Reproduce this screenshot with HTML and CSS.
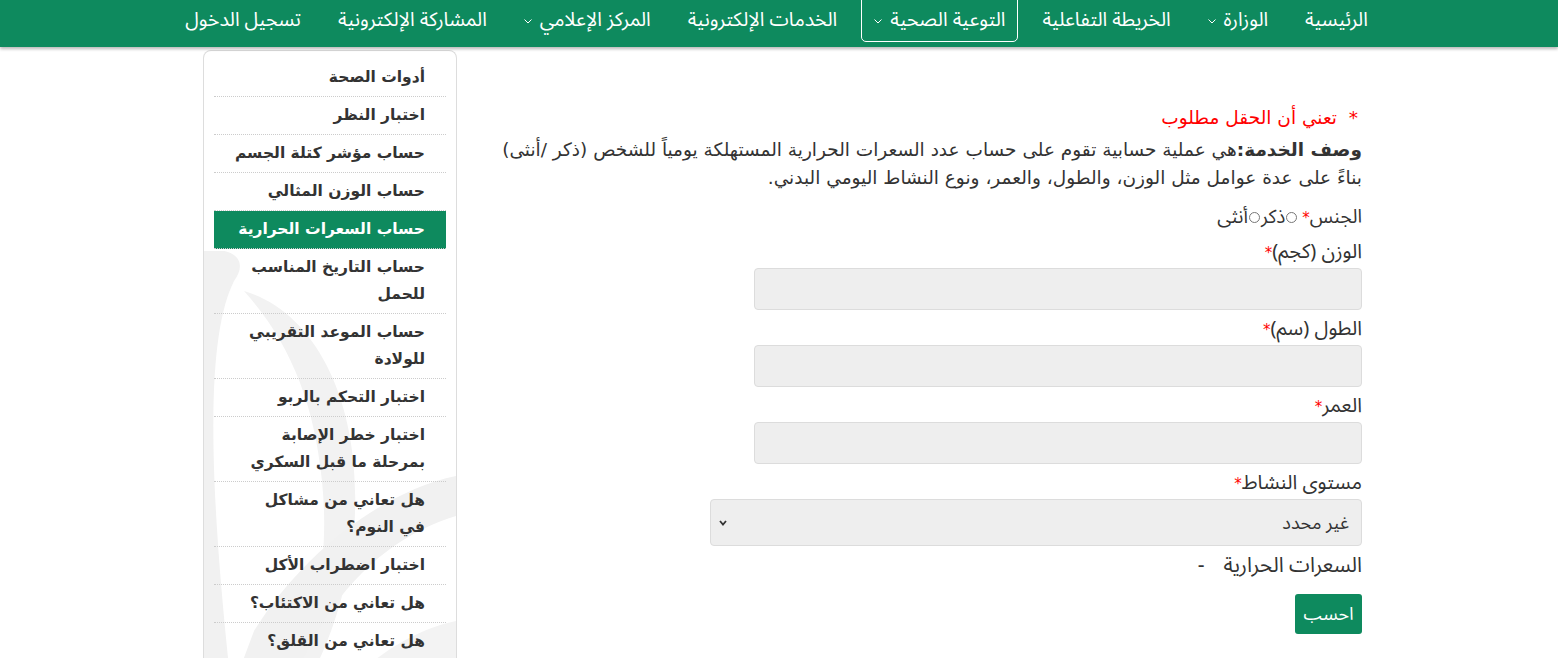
FILE: index.html
```html
<!DOCTYPE html>
<html lang="ar" dir="rtl">
<head>
<meta charset="utf-8">
<title>حساب السعرات الحرارية</title>
<link rel="stylesheet" href="styles.css">
</head>
<body>
<nav class="topnav">
  <ul class="nav-list">
    <li class="nav-item"><a class="nav-link">الرئيسية</a></li>
    <li class="nav-item"><a class="nav-link">الوزارة<svg class="chev" width="8" height="5" viewBox="0 0 8 5"><polyline points="0.5,0.5 4,4 7.5,0.5" fill="none" stroke="#fff" stroke-width="1"/></svg></a></li>
    <li class="nav-item"><a class="nav-link">الخريطة التفاعلية</a></li>
    <li class="nav-item"><a class="nav-link nav-link-active">التوعية الصحية<svg class="chev" width="8" height="5" viewBox="0 0 8 5"><polyline points="0.5,0.5 4,4 7.5,0.5" fill="none" stroke="#fff" stroke-width="1"/></svg></a></li>
    <li class="nav-item"><a class="nav-link">الخدمات الإلكترونية</a></li>
    <li class="nav-item"><a class="nav-link">المركز الإعلامي<svg class="chev" width="8" height="5" viewBox="0 0 8 5"><polyline points="0.5,0.5 4,4 7.5,0.5" fill="none" stroke="#fff" stroke-width="1"/></svg></a></li>
    <li class="nav-item"><a class="nav-link">المشاركة الإلكترونية</a></li>
    <li class="nav-item"><a class="nav-link">تسجيل الدخول</a></li>
  </ul>
</nav>

<div class="page">
  <main class="content">
    <p class="required-note"><span class="req-star">*</span>&nbsp; تعني أن الحقل مطلوب</p>
    <p class="desc"><strong>وصف الخدمة:</strong>هي عملية حسابية تقوم على حساب عدد السعرات الحرارية المستهلكة يومياً للشخص (ذكر /أنثى) بناءً على عدة عوامل مثل الوزن، والطول، والعمر، ونوع النشاط اليومي البدني.</p>

    <form class="calc-form">
      <div class="gender-row">
        <span class="field-label">الجنس<span class="req">*</span></span>
        <label class="radio-opt"><span class="radio"></span>ذكر</label><label class="radio-opt"><span class="radio"></span>أنثى</label>
      </div>

      <div class="form-group">
        <label class="field-label">الوزن (كجم)<span class="req">*</span></label>
        <input class="text-input" type="text">
      </div>
      <div class="form-group">
        <label class="field-label">الطول (سم)<span class="req">*</span></label>
        <input class="text-input" type="text">
      </div>
      <div class="form-group">
        <label class="field-label">العمر<span class="req">*</span></label>
        <input class="text-input" type="text">
      </div>
      <div class="form-group">
        <label class="field-label">مستوى النشاط<span class="req">*</span></label>
        <div class="select-box">
          <span class="select-value">غير محدد</span>
          <svg class="select-chev" width="8" height="6" viewBox="0 0 8 6"><polyline points="1,1 4,4.5 7,1" fill="none" stroke="#333" stroke-width="1.8"/></svg>
        </div>
      </div>
      <div class="result-line field-label">السعرات الحرارية <span class="result-value"></span> -</div>
      <button class="calc-btn" type="button">احسب</button>
    </form>
  </main>

  <aside class="sidebar">
    <svg class="watermark" width="252" height="460" viewBox="0 0 252 460">
      <path d="M0 0 C 30 -5, 45 10, 30 30 C 5 80, 0 200, 30 460 L 0 460 Z" fill="#f1f1f1"/>
      <path d="M40 40 C 110 60, 160 150, 150 280 C 145 330, 130 380, 110 420 L 90 420 C 115 360, 125 300, 118 230 C 110 150, 85 90, 40 40 Z" fill="#f2f2f2"/>
      <path d="M252 225 C 180 240, 100 300, 50 380 L 20 460 L 80 460 C 110 360, 170 290, 252 265 Z" fill="#f1f1f1"/>
      <path d="M120 460 C 160 410, 205 380, 252 370 L 252 460 Z" fill="#f3f3f3"/>
    </svg>
    <ul class="side-list">
      <li class="side-item">أدوات الصحة</li>
      <li class="side-item">اختبار النظر</li>
      <li class="side-item">حساب مؤشر كتلة الجسم</li>
      <li class="side-item">حساب الوزن المثالي</li>
      <li class="side-item side-item-active">حساب السعرات الحرارية</li>
      <li class="side-item">حساب التاريخ المناسب<br>للحمل</li>
      <li class="side-item">حساب الموعد التقريبي<br>للولادة</li>
      <li class="side-item">اختبار التحكم بالربو</li>
      <li class="side-item">اختبار خطر الإصابة<br>بمرحلة ما قبل السكري</li>
      <li class="side-item">هل تعاني من مشاكل<br>في النوم؟</li>
      <li class="side-item">اختبار اضطراب الأكل</li>
      <li class="side-item">هل تعاني من الاكتئاب؟</li>
      <li class="side-item">هل تعاني من القلق؟</li>
    </ul>
  </aside>
</div>
</body>
</html>
```
FILE: styles.css
```css
html, body {
  margin: 0;
  padding: 0;
  background: #ffffff;
}
body {
  direction: rtl;
  font-family: "DejaVu Sans", sans-serif;
  color: #333333;
  overflow: hidden;
}

/* ---------- top navigation ---------- */
.topnav {
  background: #0e8a5e;
  height: 47px;
  box-shadow: 0 2px 3px rgba(0, 0, 0, 0.28);
  position: relative;
  z-index: 2;
}
.nav-list {
  list-style: none;
  margin: 0;
  padding: 0 5px 0 0;
  display: flex;
  justify-content: center;
  gap: 11px;
}
.nav-item {
  margin-top: -6px;
}
.nav-link {
  display: flex;
  align-items: center;
  gap: 8px;
  color: #ffffff;
  font-family: "Noto Sans Arabic", "Noto Sans", sans-serif;
  font-size: 19.5px;
  line-height: 26px;
  padding: 12px 12px 8px;
  border: 1px solid transparent;
  border-radius: 5px;
  white-space: nowrap;
}
.nav-link-active {
  border-color: #ffffff;
}
.chev {
  display: block;
  margin-top: 2px;
}

/* ---------- page layout ---------- */
.page {
  width: 1170px;
  box-sizing: border-box;
  margin: 0 auto;
  padding: 0 2px 0 9px;
  display: flex;
  align-items: flex-start;
}
.content {
  flex: 1;
  padding: 57px 0 0 25px;
}
.sidebar {
  width: 254px;
  box-sizing: border-box;
  margin-top: 3px;
  border: 1px solid #dddddd;
  border-bottom: none;
  border-radius: 8px 8px 0 0;
  padding: 8px 10px 0;
  position: relative;
  height: 640px;
  overflow: hidden;
}
.watermark {
  position: absolute;
  left: 0;
  top: 200px;
}
.side-list {
  list-style: none;
  margin: 0;
  padding: 0;
  position: relative;
}
.side-item {
  font-weight: bold;
  font-size: 15.5px;
  line-height: 27px;
  padding: 5px 21px 5px 6px;
  border-bottom: 1px dotted #cccccc;
  color: #333333;
  white-space: nowrap;
}
.side-item-active {
  background: #0e8a5e;
  color: #ffffff;
}

/* ---------- content ---------- */
.required-note {
  margin: 0 0 4px;
  color: #ff0000;
  font-size: 18.5px;
  line-height: 28px;
}
.req-star {
  padding-right: 4px;
}
.desc {
  margin: 0 0 13px;
  font-size: 18.5px;
  line-height: 28px;
}
.calc-form {
  margin: 0;
}
.field-label {
  font-family: "Noto Sans Arabic", "DejaVu Sans", sans-serif;
  font-size: 20px;
  line-height: 24px;
  color: #333333;
}
.req {
  color: #ff0000;
  font-family: "DejaVu Sans", sans-serif;
  font-size: 15px;
  line-height: 1;
}
.gender-row {
  display: flex;
  align-items: center;
  height: 24px;
  margin-bottom: 11px;
}
.gender-row .field-label {
  font-size: 19px;
  margin-left: 4px;
}
.radio-opt {
  display: flex;
  align-items: center;
  font-family: "Noto Sans Arabic", "DejaVu Sans", sans-serif;
  font-size: 19px;
  line-height: 24px;
}
.radio {
  width: 11px;
  height: 11px;
  border: 1px solid #777777;
  border-radius: 50%;
  box-sizing: border-box;
  margin: 0 1px;
}
.form-group {
  margin-bottom: 7px;
}
.form-group .field-label {
  display: block;
  height: 24px;
  margin-bottom: 4px;
}
.text-input {
  display: block;
  width: 608px;
  height: 42px;
  box-sizing: border-box;
  border: 1px solid #dcdcdc;
  border-radius: 4px;
  background: #eeeeee;
  margin: 0;
}
.select-box {
  width: 652px;
  height: 47px;
  box-sizing: border-box;
  margin-top: 3px;
  border: 1px solid #dcdcdc;
  border-radius: 4px;
  background: #eeeeee;
  display: flex;
  align-items: center;
  justify-content: space-between;
  padding: 0 12px 0 8px;
}
.select-value {
  font-family: "Noto Sans Arabic", "DejaVu Sans", sans-serif;
  font-size: 18px;
  color: #333333;
}
.result-line {
  display: block;
  height: 24px;
  font-size: 21px;
  margin-bottom: 17px;
}
.result-value {
  display: inline-block;
  width: 8px;
}
.calc-btn {
  display: block;
  background: #0e8a5e;
  color: #ffffff;
  border: none;
  border-radius: 3px;
  height: 40px;
  width: 67px;
  font-family: "Noto Sans Arabic", "DejaVu Sans", sans-serif;
  font-size: 18px;
  padding: 0;
}
```
